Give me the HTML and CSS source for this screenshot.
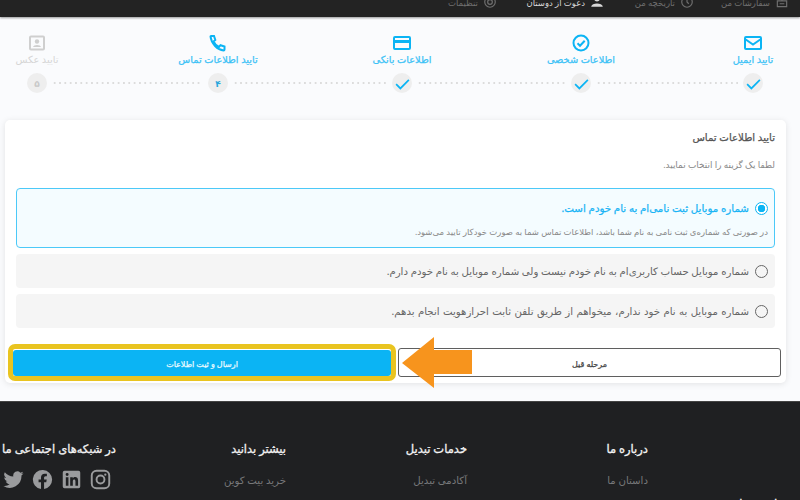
FILE: index.html
```html
<!DOCTYPE html>
<html lang="fa" dir="rtl">
<head>
    <meta charset="UTF-8">
    <meta name="viewport" content="width=device-width, initial-scale=1.0">
    <title>تایید اطلاعات تماس</title>
    <link rel="stylesheet" href="styles.css">
</head>
<body>

<header class="topbar">
    <a class="topbar-item orders">
        <svg class="topbar-icon" viewBox="0 0 24 24"><path d="M4 10h16v10H4zM12 10V4M8 15h8"/></svg>
        سفارشات من
    </a>
    <a class="topbar-item history">
        <svg class="topbar-icon" viewBox="0 0 24 24"><circle cx="12" cy="12" r="9"/><path d="M12 7v5l3 3"/></svg>
        تاریخچه من
    </a>
    <a class="topbar-item invite">
        <svg class="topbar-icon" viewBox="0 0 24 24"><circle cx="12" cy="6" r="5" class="solid"/><path d="M2 20c1-7 19-7 20 0z" class="solid"/></svg>
        دعوت از دوستان
    </a>
    <a class="topbar-item">
        <svg class="topbar-icon" viewBox="0 0 24 24"><circle cx="12" cy="12" r="4"/><circle cx="12" cy="12" r="9"/></svg>
        تنظیمات
    </a>
</header>

<section class="stepper">
    <div class="step done">
        <svg class="step-icon" viewBox="0 0 24 24"><rect x="4" y="6" width="16" height="12" rx="1"/><path d="M4 8l8 5.500L20 8"/></svg>
        <span class="step-label">تایید ایمیل</span>
        <span class="step-circle"><svg viewBox="0 0 24 24"><path d="M3 13l6 6L21 7"/></svg></span>
    </div>
    <span class="connector c1"></span>
    <div class="step done">
        <svg class="step-icon" viewBox="0 0 24 24"><circle cx="12" cy="12" r="7.500"/><path d="M8.500 12.300l2.500 2.500 4.700-5"/></svg>
        <span class="step-label">اطلاعات شخصی</span>
        <span class="step-circle"><svg viewBox="0 0 24 24"><path d="M3 13l6 6L21 7"/></svg></span>
    </div>
    <span class="connector c2"></span>
    <div class="step done">
        <svg class="step-icon" viewBox="0 0 24 24"><rect x="4" y="6" width="16" height="12" rx="1"/><path d="M4 10.500h16" stroke-width="3"/></svg>
        <span class="step-label">اطلاعات بانکی</span>
        <span class="step-circle"><svg viewBox="0 0 24 24"><path d="M3 13l6 6L21 7"/></svg></span>
    </div>
    <span class="connector c3"></span>
    <div class="step current">
        <svg class="step-icon" viewBox="0 0 24 24"><path d="M5 5h3l1.300 4-1.800 1.500c1.100 2.500 3 4.400 5.500 5.500l1.500-1.800 4 1.300v3c0 .5-.4 .9-.9 .9C11.500 18.900 5.300 12.700 4.500 5.500c0-.3.200-.5.500-.5z"/></svg>
        <span class="step-label">تایید اطلاعات تماس</span>
        <span class="step-circle">۴</span>
    </div>
    <span class="connector c4"></span>
    <div class="step pending">
        <svg class="step-icon" viewBox="0 0 24 24"><rect x="5" y="5.500" width="14" height="13" rx="1"/><circle cx="12" cy="10.500" r="2.200" class="fill"/><path d="M8 16c.5-2.800 7.500-2.800 8 0z" class="fill"/></svg>
        <span class="step-label">تایید عکس</span>
        <span class="step-circle">۵</span>
    </div>
</section>

<main class="card">
    <h2 class="card-title">تایید اطلاعات تماس</h2>
    <p class="card-hint">لطفا یک گزینه را انتخاب نمایید.</p>

    <div class="option selected">
        <div class="option-row">
            <span class="radio"></span>
            <span class="option-text">شماره موبایل ثبت نامی‌ام به نام خودم است.</span>
        </div>
        <p class="option-note">در صورتی که شماره‌ی ثبت نامی به نام شما باشد، اطلاعات تماس شما به صورت خودکار تایید می‌شود.</p>
    </div>
    <div class="option">
        <div class="option-row">
            <span class="radio"></span>
            <span class="option-text">شماره موبایل حساب کاربری‌ام به نام خودم نیست ولی شماره موبایل به نام خودم دارم.</span>
        </div>
    </div>
    <div class="option">
        <div class="option-row">
            <span class="radio"></span>
            <span class="option-text spaced">شماره موبایل به نام خود ندارم، میخواهم از طریق تلفن ثابت احرازهویت انجام بدهم.</span>
        </div>
    </div>

    <div class="actions">
        <button class="btn btn-back" type="button">مرحله قبل</button>
        <button class="btn btn-submit" type="button">ارسال و ثبت اطلاعات</button>
    </div>
    <span class="highlight"></span>
    <svg class="arrow" viewBox="0 0 70 51"><path d="M0 26L32 0V13H70V37H32V51z"/></svg>
</main>

<footer class="footer">
    <div class="footer-col">
        <h3>درباره ما</h3>
        <a>داستان ما</a>
    </div>
    <div class="footer-col">
        <h3>خدمات تبدیل</h3>
        <a>آکادمی تبدیل</a>
    </div>
    <div class="footer-col narrow">
        <h3>بیشتر بدانید</h3>
        <a>خرید بیت کوین</a>
    </div>
    <div class="footer-col social">
        <h3>در شبکه‌های اجتماعی ما را دنبال کنید</h3>
        <div class="social-icons">
            <svg viewBox="0 0 24 24"><rect x="2" y="2" width="20" height="20" rx="5.500" fill="none" stroke="#9a9b9d" stroke-width="2.200"/><circle cx="12" cy="12" r="4.500" fill="none" stroke="#9a9b9d" stroke-width="2.200"/><circle cx="17.500" cy="6.500" r="1.300"/></svg>
            <svg viewBox="0 0 24 24"><path d="M4 2h16a2 2 0 0 1 2 2v16a2 2 0 0 1-2 2H4a2 2 0 0 1-2-2V4a2 2 0 0 1 2-2zm1.500 7.500V19h3V9.500zM7 4.700a1.700 1.700 0 1 0 0 3.400 1.700 1.700 0 0 0 0-3.400zM10.500 9.500V19h3v-5c0-2.600 3-2.700 3 0v5h3v-6c0-4.500-4.700-4.500-6-2.200V9.500z" fill-rule="evenodd"/></svg>
            <svg viewBox="0 0 24 24"><path d="M23 12a11 11 0 1 0-12.700 10.900v-7.700H7.500V12h2.800V9.600c0-2.800 1.600-4.300 4.200-4.300 1.200 0 2.500.2 2.500.2v2.700h-1.400c-1.400 0-1.800.9-1.800 1.700V12h3l-.5 3.200h-2.500v7.700A11 11 0 0 0 23 12z"/></svg>
            <svg viewBox="0 0 24 24"><path d="M23.500 4.900c-.8.400-1.700.6-2.700.8 1-.6 1.700-1.500 2-2.600-.9.500-1.900.9-3 1.100a4.700 4.700 0 0 0-8 4.300C7.900 8.300 4.500 6.400 2.100 3.600a4.700 4.700 0 0 0 1.500 6.300c-.8 0-1.500-.2-2.100-.6 0 2.300 1.600 4.200 3.800 4.700-.7.200-1.400.2-2.100.1.600 1.900 2.300 3.200 4.400 3.300A9.500 9.500 0 0 1 .5 19.300 13.400 13.400 0 0 0 21.100 7.400c.9-.7 1.700-1.500 2.400-2.500z"/></svg>
        </div>
    </div>
    <p class="footer-tagline">و مطمئن برای خرید و</p>
</footer>

</body>
</html>
```

FILE: styles.css
```css
* {
    box-sizing: border-box;
}

html, body {
    height: 500px;
    overflow: hidden;
}

body {
    margin: 0;
    font-family: 'Noto Sans', 'DejaVu Sans', sans-serif;
    background-color: #fafbfd;
    color: #555;
}

/* top bar, scrolled so only the bottom of it shows */
.topbar {
    height: 17px;
    background-color: #232323;
    box-shadow: 0 1px 2px rgba(0, 0, 0, 0.4);
    display: flex;
    align-items: flex-start;
    overflow: hidden;
    padding-right: 11px;
}

.topbar-item {
    display: flex;
    align-items: center;
    gap: 5px;
    width: 107px;
    height: 14px;
    margin-top: -5px;
    font-size: 8.500px;
    color: #6f6f6f;
    white-space: nowrap;
}

.topbar-item.orders {
    width: 95px;
}

.topbar-item.history {
    width: 90px;
}

.topbar-item.invite {
    color: #d8d8d8;
}

.topbar-icon {
    width: 14px;
    height: 14px;
    fill: none;
    stroke: currentColor;
    stroke-width: 2;
}

.topbar-icon .solid {
    fill: currentColor;
    stroke: none;
}

/* steps */
.stepper {
    display: flex;
    padding: 14px 37px 0 0;
    height: 103px;
}

.step {
    width: 20px;
    display: flex;
    flex-direction: column;
    align-items: center;
    white-space: nowrap;
    flex-shrink: 0;
}

.step-icon {
    width: 24px;
    height: 24px;
    fill: none;
    stroke: #0bb4f4;
    stroke-width: 2;
    flex-shrink: 0;
}

.step-label {
    margin-top: -2px;
    height: 14px;
    line-height: 14px;
    font-size: 9.800px;
    -webkit-text-stroke: 0.25px currentColor;
    color: #3cc2f6;
}

.step-circle {
    margin-top: 6px;
    width: 20px;
    height: 20px;
    border-radius: 50%;
    background-color: #eeeeee;
    display: flex;
    align-items: center;
    justify-content: center;
    font-size: 9px;
    font-weight: bold;
    color: #2aa7dc;
    flex-shrink: 0;
}

.step-circle svg {
    width: 17px;
    height: 17px;
    fill: none;
    stroke: #0bb4f4;
    stroke-width: 2.400;
}

.step.pending .step-icon {
    stroke: #cfcfcf;
}

.step.pending .step-icon .fill {
    fill: #cfcfcf;
    stroke: none;
}

.step.pending .step-label {
    color: #d5d5d5;
    -webkit-text-stroke: 0;
}

.step.pending .step-circle {
    color: #c9c9c9;
}

.connector {
    height: 2px;
    margin: 51px 5px 0;
    background-image: radial-gradient(circle, #dcdcdc 1px, transparent 1.200px);
    background-size: 5.330px 2px;
}

.c1 { width: 142px; }
.c2 { width: 149px; }
.c3 { width: 154px; }
.c4 { width: 151px; }

/* card */
.card {
    position: relative;
    width: 781px;
    height: 263px;
    margin: 0 14px 0 5px;
    padding: 9px 11px 0 11px;
    background-color: #fff;
    border-radius: 5px;
    box-shadow: 0 1px 6px rgba(0, 0, 0, 0.1);
}

.card-title {
    margin: 0;
    height: 16px;
    line-height: 16px;
    font-size: 10.200px;
    font-weight: normal;
    -webkit-text-stroke: 0.25px currentColor;
    color: #555;
}

.card-hint {
    margin: 13px 0 16px;
    height: 14px;
    line-height: 14px;
    font-size: 8.900px;
    color: #888;
}

.option {
    display: flex;
    flex-direction: column;
    justify-content: center;
    min-height: 34px;
    margin-bottom: 6px;
    padding: 0 7px;
    background-color: #f5f5f5;
    border-radius: 4px;
}

.option.selected {
    height: 60px;
    padding: 2px 6px 0;
    background-color: #f4fcff;
    border: 1px solid #4cc9f8;
}

.option-row {
    display: flex;
    align-items: center;
    gap: 6px;
}

.radio {
    width: 13px;
    height: 13px;
    border: 1px solid #666;
    border-radius: 50%;
    flex-shrink: 0;
}

.option.selected .radio {
    border: 1.500px solid #0bb4f4;
    background: radial-gradient(circle, #0bb4f4 3.500px, #fff 4px);
}

.option-text {
    font-size: 10.200px;
    color: #666;
}

.option-text.spaced {
    word-spacing: 0.7px;
}

.option.selected .option-text {
    font-size: 10.300px;
    -webkit-text-stroke: 0.25px currentColor;
    color: #1ab4f5;
}

.option-note {
    margin: 11px 0 0;
    font-size: 8.500px;
    color: #888;
}

.actions {
    display: flex;
    gap: 7px;
    margin-top: 20px;
    align-items: center;
    margin-left: -3px;
    margin-right: -6px;
}

.btn {
    flex: none;
    padding-top: 2px;
    font-family: inherit;
    font-size: 8px;
    -webkit-text-stroke: 0.25px currentColor;
    border-radius: 3px;
}

.btn-back {
    width: 383px;
    height: 29px;
    background-color: #fff;
    border: 1.500px solid #5f5f5f;
    color: #444;
}

.btn-submit {
    width: 378px;
    height: 26px;
    background-color: #0bb4f4;
    border: none;
    color: #eafaff;
}

/* annotations on top of the screenshot */
.highlight {
    position: absolute;
    left: 3px;
    top: 224px;
    width: 388px;
    height: 37px;
    border: 5px solid #e9c420;
    border-radius: 7px;
}

.arrow {
    position: absolute;
    left: 397px;
    top: 217px;
    width: 70px;
    height: 51px;
    fill: #f7941d;
}

/* footer */
.footer {
    position: relative;
    height: 99px;
    margin-top: 18px;
    background-color: #1f2022;
    border-top: 1px solid #444;
    display: flex;
    padding: 38px 152px 0 0;
}

.footer-col {
    width: 181px;
    flex-shrink: 0;
    display: flex;
    flex-direction: column;
    align-items: flex-start;
    white-space: nowrap;
}

.footer-col.narrow {
    width: 170px;
}

.footer-col h3 {
    margin: 0;
    height: 18px;
    line-height: 18px;
    font-size: 11.500px;
    font-weight: normal;
    -webkit-text-stroke: 0.3px currentColor;
    color: #f2f2f2;
}

.footer-col a {
    margin-top: 15px;
    font-size: 10.200px;
    color: #77787a;
}

.social-icons {
    display: flex;
    gap: 8px;
    margin-top: 11px;
    margin-right: 5px;
}

.social-icons svg {
    width: 21px;
    height: 21px;
    fill: #9a9b9d;
}

.footer-tagline {
    position: absolute;
    right: 2px;
    top: 94px;
    margin: 0;
    font-size: 11.500px;
    -webkit-text-stroke: 0.3px currentColor;
    color: #f2f2f2;
    white-space: nowrap;
}
```
